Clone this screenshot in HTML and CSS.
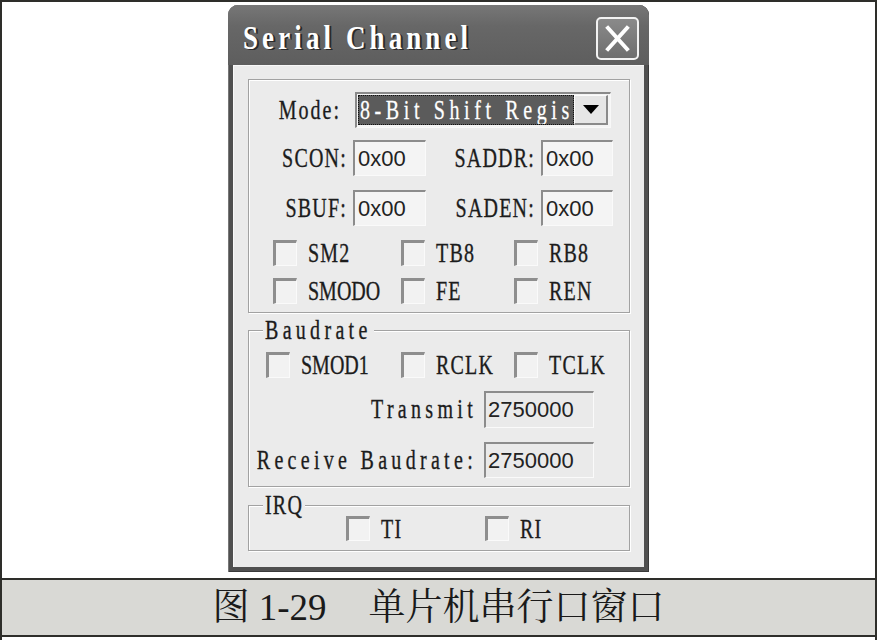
FILE: index.html
```html
<!DOCTYPE html>
<html>
<head>
<meta charset="utf-8">
<link rel="stylesheet" href="styles.css">
</head>
<body>
<div class="page">
  <div class="stage">
    <div class="window">
      <div class="titlebar">
        <span class="title">Serial Channel</span>
        <div class="close">
          <svg width="39" height="39" viewBox="0 0 39 39"><path d="M10 9 L29 30 M29 9 L10 30" stroke="#fff" stroke-width="4" stroke-linecap="square" fill="none"/></svg>
        </div>
      </div>
      <div class="client">
        <div class="group g1">
          <div class="mode-row">
            <span class="lbl-cell mode-lbl"><span class="t lo">Mode:</span></span>
            <div class="combo">
              <div class="combo-sel"><span class="t tw">8-Bit Shift Regis</span></div>
              <div class="combo-btn"><svg width="16" height="9" viewBox="0 0 16 9"><path d="M0 0 H16 L8 9 Z" fill="#000"/></svg></div>
            </div>
          </div>
          <div class="reg-grid">
            <span class="lbl-cell"><span class="t">SCON:</span></span>
            <div class="edit">0x00</div>
            <span class="lbl-cell"><span class="t">SADDR:</span></span>
            <div class="edit">0x00</div>
            <span class="lbl-cell"><span class="t">SBUF:</span></span>
            <div class="edit">0x00</div>
            <span class="lbl-cell"><span class="t">SADEN:</span></span>
            <div class="edit">0x00</div>
          </div>
          <div class="checks c1">
            <label class="chk"><span class="cb"></span><span class="t">SM2</span></label>
            <label class="chk"><span class="cb"></span><span class="t">TB8</span></label>
            <label class="chk"><span class="cb"></span><span class="t">RB8</span></label>
            <label class="chk"><span class="cb"></span><span class="t nar">SMODO</span></label>
            <label class="chk"><span class="cb"></span><span class="t">FE</span></label>
            <label class="chk"><span class="cb"></span><span class="t">REN</span></label>
          </div>
        </div>
        <div class="group g2">
          <span class="legend"><span class="t wide">Baudrate</span></span>
          <div class="checks c2">
            <label class="chk"><span class="cb"></span><span class="t nar">SMOD1</span></label>
            <label class="chk"><span class="cb"></span><span class="t">RCLK</span></label>
            <label class="chk"><span class="cb"></span><span class="t">TCLK</span></label>
          </div>
          <div class="baud-grid">
            <span class="lbl-cell"><span class="t wide">Transmit</span></span>
            <div class="edit ro">2750000</div>
            <span class="lbl-cell"><span class="t wide">Receive Baudrate:</span></span>
            <div class="edit ro">2750000</div>
          </div>
        </div>
        <div class="group g3">
          <span class="legend"><span class="t">IRQ</span></span>
          <div class="checks c3">
            <label class="chk"><span class="cb"></span><span class="t">TI</span></label>
            <label class="chk"><span class="cb"></span><span class="t">RI</span></label>
          </div>
        </div>
      </div>
    </div>
  </div>
  <div class="caption"><span class="cap-lat">图 1-29</span><span class="cap-gap"></span><span>单片机串行口窗口</span></div>
</div>
</body>
</html>
```
FILE: styles.css
```css
* { box-sizing: border-box; }
html, body { margin: 0; padding: 0; background: #fff; }
body { width: 880px; height: 640px; overflow: hidden; }

.page {
  width: 877px;
  height: 640px;
  border-left: 2px solid #2e2e2a;
  border-right: 2px solid #2e2e2a;
  border-top: 2px solid #2e2e2a;
  display: flex;
  flex-direction: column;
}
.stage {
  height: 576px;
  padding-top: 3px;
  display: flex;
  justify-content: center;
}

.window {
  width: 421px;
  height: 567px;
  background: #505050;
  border-radius: 10px 10px 0 0;
  padding: 0 5px 5px;
  display: flex;
  flex-direction: column;
  box-shadow: inset 1px 0 0 #777, inset -1px 0 0 #3a3a3a, inset 0 -1px 0 #3a3a3a;
}
.titlebar {
  height: 60px;
  margin: 0 -5px;
  padding: 0 10px 0 15px;
  display: flex;
  align-items: center;
  justify-content: space-between;
  background: linear-gradient(#777, #676767 35%, #5e5e5e);
  border-radius: 10px 10px 0 0;
}
.title {
  display: inline-block;
  font-family: "Liberation Serif", serif;
  font-weight: bold;
  font-size: 27px;
  letter-spacing: 4.1px;
  color: #fff;
  transform: scaleY(1.25);
  text-shadow: 2px 1px 0 #2a2a2a;
  line-height: 1;
  margin-top: 6px;
  white-space: pre;
}
.close {
  width: 43px;
  height: 43px;
  border: 2px solid #f2f2f2;
  border-radius: 5px;
  background: linear-gradient(#8a8a8a, #6e6e6e);
  display: flex;
  align-items: center;
  justify-content: center;
  margin-top: 6px;
}

.client {
  flex: 1;
  background: #ebebeb;
  padding: 14px 14px 16px 15px;
  display: flex;
  flex-direction: column;
  box-shadow: inset 1px 1px 0 #f8f8f8;
}

.group {
  position: relative;
  border: 1px solid #a2a2a2;
  box-shadow: 1px 1px 0 #fff, inset 1px 1px 0 #fff;
}
.g1 { height: 234px; padding-top: 12px; }
.g2 { height: 157px; margin-top: 17px; padding-top: 21px; }
.g3 { height: 46px; margin-top: 18px; padding-top: 10px; }

.legend {
  position: absolute;
  left: 14px;
  top: -11px;
  background: #ebebeb;
  padding: 0 2px;
  line-height: 20px;
}

.t {
  display: inline-block;
  font-family: "Liberation Serif", serif;
  font-size: 20px;
  line-height: 1;
  letter-spacing: 1.2px;
  color: #1c1c1c;
  transform: scaleY(1.35);
  white-space: pre;
  -webkit-text-stroke: 0.25px #1c1c1c;
}
.t.nar { letter-spacing: 0; }
.t.lo { letter-spacing: 2px; }
.t.wide { letter-spacing: 4.3px; }
.tw {
  color: #fff;
  letter-spacing: 4.6px;
  -webkit-text-stroke: 0.2px #fff;
}

.lbl-cell { text-align: right; }

.mode-row {
  display: flex;
  align-items: center;
  height: 36px;
}
.mode-lbl { width: 92px; }
.combo {
  margin-left: 14px;
  width: 256px;
  height: 36px;
  border-style: solid;
  border-width: 2px 1px 1px 2px;
  border-color: #8a8a8a #f8f8f8 #f8f8f8 #8a8a8a;
  background: #f4f4f4;
  display: flex;
  align-items: stretch;
  padding: 1px 2px 2px 1px;
}
.combo-sel {
  flex: 1;
  background: #5b5b5b;
  border: 1px dotted #e8e8e8;
  outline: 1px dotted #111;
  outline-offset: -1px;
  display: flex;
  align-items: center;
  padding-left: 1px;
  overflow: hidden;
}
.combo-btn {
  width: 34px;
  background: #e6e6e6;
  border-style: solid;
  border-width: 1px 2px 2px 1px;
  border-color: #fbfbfb #8a8a8a #8a8a8a #fbfbfb;
  display: flex;
  align-items: center;
  justify-content: center;
}

.reg-grid {
  margin-top: 12px;
  display: grid;
  grid-template-columns: 98px 73px 103px 72px;
  grid-template-rows: 36px 36px;
  column-gap: 6px;
  row-gap: 14px;
  align-items: center;
}

.edit {
  height: 100%;
  border-style: solid;
  border-width: 2px 1px 1px 2px;
  border-color: #8c8c8c #fafafa #fafafa #8c8c8c;
  background: #f4f4f4;
  font-family: "Liberation Sans", sans-serif;
  font-size: 22px;
  color: #222;
  padding-left: 3px;
  display: flex;
  align-items: center;
}
.edit.ro { background: #eaeaea; padding-left: 2px; }

.checks {
  display: grid;
  align-items: center;
}
.c1 {
  margin-top: 14px;
  padding-left: 24px;
  grid-template-columns: 128px 113px auto;
  grid-auto-rows: 26px;
  row-gap: 12px;
}
.c2 {
  padding-left: 17px;
  grid-template-columns: 135px 113px auto;
  grid-auto-rows: 26px;
}
.c3 {
  padding-left: 97px;
  grid-template-columns: 139px auto;
  grid-auto-rows: 25px;
}

.chk {
  display: flex;
  align-items: center;
  height: 100%;
}
.cb {
  width: 24px;
  height: 100%;
  border-style: solid;
  border-width: 3px 1px 1px 3px;
  border-color: #8e8e8e #fafafa #fafafa #8e8e8e;
  background: #f2f2f2;
  margin-right: 11px;
  flex: none;
}

.baud-grid {
  margin-top: 13px;
  display: grid;
  grid-template-columns: 228px 110px;
  grid-template-rows: 37px 36px;
  column-gap: 7px;
  row-gap: 14px;
  align-items: center;
}

.caption {
  height: 59px;
  border-top: 2px solid #2e2e2a;
  border-bottom: 2px solid #2e2e2a;
  background: #d9d9d5;
  display: flex;
  align-items: center;
  justify-content: center;
  font-family: "Liberation Serif", "Noto Serif CJK SC", "Noto Sans CJK SC", serif;
  font-size: 37px;
  color: #1a1a1a;
  line-height: 1;
  flex: none;
}
.cap-lat { white-space: pre; }
.cap-gap { display: inline-block; width: 42px; }
```
